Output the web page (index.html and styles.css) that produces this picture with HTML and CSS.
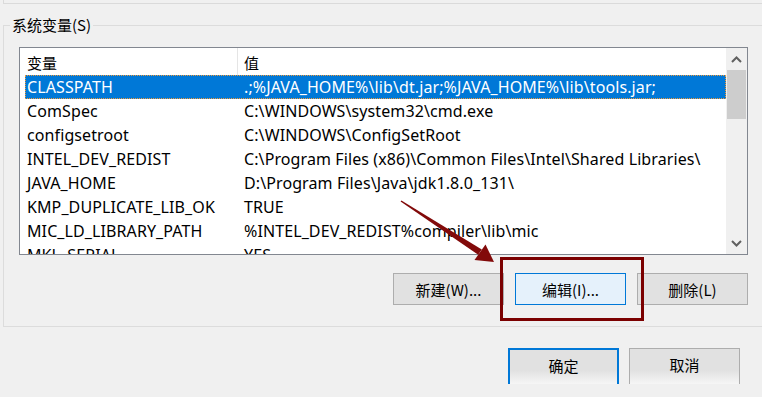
FILE: index.html
```html
<!DOCTYPE html>
<html lang="zh-CN">

<head>
    <meta charset="utf-8">
    <title>环境变量</title>
    <link rel="stylesheet" href="styles.css">
</head>

<body>
    <div class="top-edge"></div>

    <!--系统变量分组-->
    <fieldset class="group">
        <legend>系统变量(S)</legend>
        <div class="group-body">
            <div class="listbox">
                <div class="list">
                    <div class="row head">
                        <span class="name">变量</span>
                        <span class="value">值</span>
                    </div>
                    <div class="row selected">
                        <span class="name">CLASSPATH</span>
                        <span class="value">.;%JAVA_HOME%\lib\dt.jar;%JAVA_HOME%\lib\tools.jar;</span>
                    </div>
                    <div class="row">
                        <span class="name">ComSpec</span>
                        <span class="value">C:\WINDOWS\system32\cmd.exe</span>
                    </div>
                    <div class="row">
                        <span class="name">configsetroot</span>
                        <span class="value">C:\WINDOWS\ConfigSetRoot</span>
                    </div>
                    <div class="row">
                        <span class="name">INTEL_DEV_REDIST</span>
                        <span class="value">C:\Program Files (x86)\Common Files\Intel\Shared Libraries\</span>
                    </div>
                    <div class="row">
                        <span class="name">JAVA_HOME</span>
                        <span class="value">D:\Program Files\Java\jdk1.8.0_131\</span>
                    </div>
                    <div class="row">
                        <span class="name">KMP_DUPLICATE_LIB_OK</span>
                        <span class="value">TRUE</span>
                    </div>
                    <div class="row">
                        <span class="name">MIC_LD_LIBRARY_PATH</span>
                        <span class="value">%INTEL_DEV_REDIST%compiler\lib\mic</span>
                    </div>
                    <div class="row">
                        <span class="name">MKL_SERIAL</span>
                        <span class="value">YES</span>
                    </div>
                </div>
                <div class="scrollbar">
                    <div class="arrow-btn">
                        <svg width="11" height="7" viewBox="0 0 11 7"><path d="M1 6 L5.5 1.5 L10 6" fill="none" stroke="#606060" stroke-width="2"/></svg>
                    </div>
                    <div class="thumb"></div>
                    <div class="track"></div>
                    <div class="arrow-btn">
                        <svg width="11" height="7" viewBox="0 0 11 7"><path d="M1 1 L5.5 5.5 L10 1" fill="none" stroke="#606060" stroke-width="2"/></svg>
                    </div>
                </div>
            </div>

            <div class="buttons">
                <button>新建(W)...</button>
                <button class="active">编辑(I)...</button>
                <button>删除(L)</button>
            </div>
        </div>
    </fieldset>

    <div class="dialog-buttons">
        <button class="default">确定</button>
        <button>取消</button>
    </div>

    <!--标注：红框和箭头-->
    <div class="mark-box"></div>
    <svg class="mark-arrow" width="762" height="397" viewBox="0 0 762 397">
        <polygon points="400.6,201.6 401.4,200.4 481.8,249.6 478.2,254.8" fill="#820a0a"/>
        <polygon points="494,262 485.5,244.5 474.5,260" fill="#820a0a"/>
    </svg>
</body>

</html>
```

FILE: styles.css
```css
/*GENERELT*/
* {
    margin: 0;
    padding: 0;
    box-sizing: border-box;
}

body {
    margin: 0;
    background: #f0f0f0;
    font-family: "Noto Sans", "Noto Sans CJK SC", sans-serif;
    font-size: 15px;
    color: #000;
    overflow: hidden;
    position: relative;
    width: 762px;
    height: 397px;
}

.top-edge {
    margin-left: 3px;
    height: 4px;
    border-left: 1px solid #dadada;
    border-bottom: 1px solid #dadada;
}

/*GRUPPE*/
.group {
    margin: 11px -20px 0 3px;
    border: 1px solid #dcdcdc;
}

.group legend {
    margin-left: 6px;
    padding: 0 2px;
    line-height: 20px;
    font-family: "Noto Sans CJK SC", sans-serif;
}

.group-body {
    padding: 12px 0 21px 15px;
}

/*LISTE*/
.listbox {
    display: flex;
    width: 729px;
    height: 208px;
    border: 1px solid #828790;
    background: #fff;
}

.list {
    width: 706px;
    padding-left: 5px;
    overflow: hidden;
}

.row {
    display: flex;
    height: 24px;
    line-height: 24px;
    font-size: 16px;
    letter-spacing: 0.1px;
    white-space: nowrap;
}

.row.head {
    height: 27px;
    line-height: 30px;
    margin-left: -5px;
    padding-left: 5px;
    font-size: 15px;
    letter-spacing: 0;
    font-family: "Noto Sans CJK SC", sans-serif;
}

.row .name {
    width: 212px;
    padding-left: 2px;
    flex-shrink: 0;
}

.row .value {
    padding-left: 7px;
}

.row.head .value {
    border-left: 1px solid #e5e5e5;
    padding-left: 6px;
}

.row.selected {
    background: #0078d7;
    color: #fff;
    outline: 1px dotted #f09a3a;
    outline-offset: -1px;
}

/*SCROLLBAR*/
.scrollbar {
    width: 21px;
    display: flex;
    flex-direction: column;
    background: #f0f0f0;
}

.arrow-btn {
    height: 22px;
    display: flex;
    align-items: center;
    justify-content: center;
}

.thumb {
    height: 49px;
    margin: 0 1px;
    background: #cdcdcd;
}

.track {
    flex: 1;
}

/*KNAPPER*/
button {
    width: 111px;
    height: 32px;
    background: #e1e1e1;
    border: 1px solid #adadad;
    font-family: "Noto Sans CJK SC", sans-serif;
    font-size: 15px;
    color: #000;
}

.buttons {
    width: 729px;
    margin-top: 18px;
    display: flex;
    justify-content: flex-end;
    gap: 11px;
}

.buttons button.active {
    background: #e5f1fb;
    border-color: #0078d7;
}

.dialog-buttons {
    margin: 21px 22px 0 0;
    display: flex;
    justify-content: flex-end;
    gap: 10px;
}

.dialog-buttons button {
    height: 36px;
    padding-bottom: 4px;
    border-bottom: none;
    background: linear-gradient(#e1e1e1 0, #e1e1e1 60%, #f6f6f6 100%);
}

.dialog-buttons button.default {
    border: 2px solid #0078d7;
    border-bottom: none;
}

/*ANNOTATION*/
.mark-box {
    position: absolute;
    left: 500px;
    top: 257px;
    width: 144px;
    height: 64px;
    border: 3px solid #7b0000;
}

.mark-arrow {
    position: absolute;
    left: 0;
    top: 0;
}
```
